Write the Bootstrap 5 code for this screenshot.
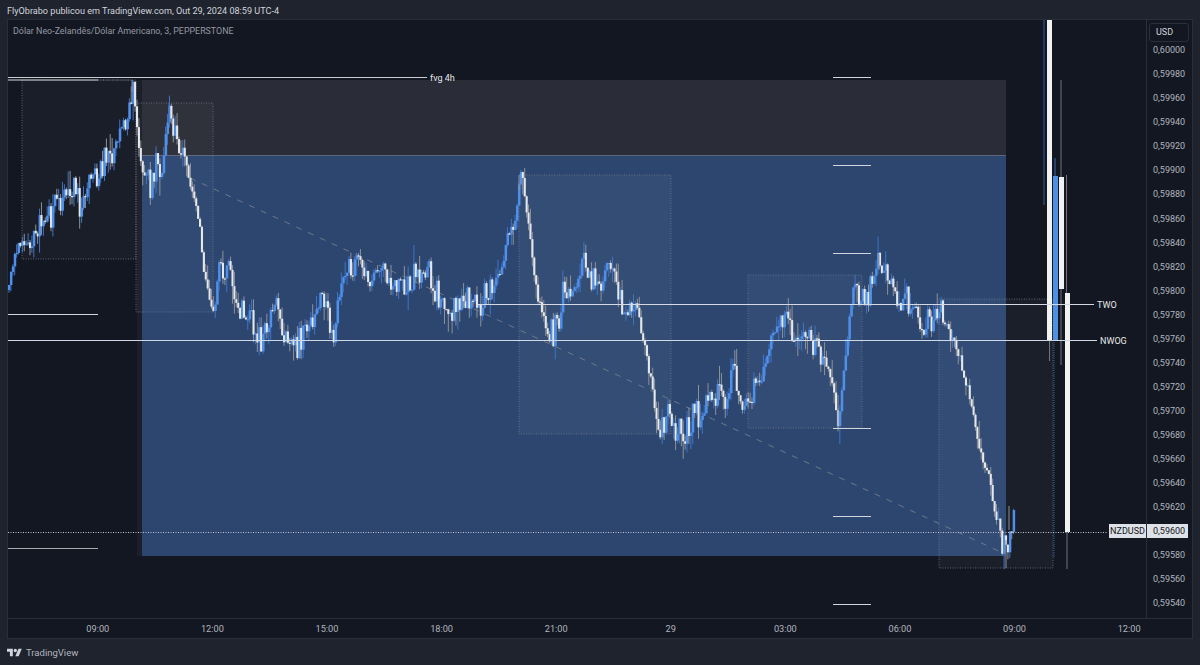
<!DOCTYPE html>
<html lang="pt">
<head>
  <meta charset="UTF-8" />
  <title>NZDUSD — TradingView</title>
  <meta name="viewport" content="width=device-width, initial-scale=1" />
  <link href="https://cdn.jsdelivr.net/npm/bootstrap@5.3.0/dist/css/bootstrap.min.css" rel="stylesheet" />
  <style>
    body {
      background: #1f232e;
      font-family: "Roboto", "Liberation Sans", sans-serif;
      font-size: 9px;
      color: #b2b5be;
      width: 1200px;
      height: 665px;
      overflow: hidden;
    }
    .snap-head { height: 19px; padding-left: 7px; line-height: 23px; color: #d1d4dc; font-size: 9.1px; }
    .chart-box { width: 1186px; height: 620px; margin-left: 7px; background: #131722; border: 1px solid #2a2e39; }
    .plot { width: 1138px; height: 598px; }
    .plot svg { display: block; }
    .candles { filter: blur(0.3px); }
    .plot-title { top: 5px; left: 5px; color: #9598a1; font-size: 8.9px; }
    .price-axis { width: 46px; border-left: 1px solid #2a2e39; padding-top: 18.3px; }
    .price-axis div { height: 24.04px; line-height: 24.04px; padding-left: 6px; font-size: 9px; }
    .price-axis .now { color: #131722; padding-top: 5px; }
    .price-axis .now span { display: block; height: 14px; line-height: 14px; width: 41px; margin-left: -6px; padding-left: 6px; background: #dfe1e8; position: relative; }
    .sym-tag { right: 100%; top: 0; width: 37px; height: 14px; margin-right: 1px; background: #dfe1e8; color: #131722; text-align: center; font-size: 9px; }
    .price-axis .usd-btn { top: 3px; left: 2px; width: 40px; height: 19px; line-height: 17px; border: 1px solid #2a2e39; border-radius: 3px; color: #d1d4dc; padding-left: 6px; font-size: 9px; background: #131722; }
    .time-axis { height: 20px; border-top: 1px solid #2a2e39; line-height: 19px; font-size: 9.2px; }
    .time-axis span { width: 114.6px; text-align: center; flex: none; }
    .time-axis .lead { width: 32.5px; }
    .snap-foot { padding: 8px 0 0 7px; color: #b2b5be; font-size: 9.5px; line-height: 12px; }
    .snap-foot svg { width: 15px; height: 12px; }
    .hl-label { fill: #e6e7ea; font-size: 9px; font-family: "Roboto", "Liberation Sans", sans-serif; }
  </style>
</head>
<body class="m-0">

  <div class="snap-head">FlyObrabo publicou em TradingView.com, Out 29, 2024 08:59 UTC-4</div>

  <div class="chart-box">
    <div class="d-flex">
      <div class="plot position-relative">
        <svg id="chart" width="1138" height="598" viewBox="8 20 1138 598"></svg>
        <div class="plot-title position-absolute">Dólar Neo-Zelandês/Dólar Americano, 3, PEPPERSTONE</div>
      </div>
      <div class="price-axis position-relative" id="prices">
        <div class="usd-btn position-absolute">USD</div>
      </div>
    </div>
    <div class="time-axis d-flex" id="times"></div>
  </div>

  <div class="snap-foot d-flex align-items-center gap-1">
    <svg viewBox="0 0 36 28"><path fill="#d1d4dc" d="M14 22H7V11H0V4h14v18zM28 22h-8l7.5-18h8L28 22z"/><circle fill="#d1d4dc" cx="20" cy="8" r="4"/></svg>
    <span>TradingView</span>
  </div>

  <script>
    // price scale
    const axis = document.getElementById("prices");
    for (let i = 0; i < 24; i++) {
      const v = (60000 - i * 20).toString();
      const el = document.createElement("div");
      const txt = "0," + v;
      if (v === "59600") {
        el.className = "now";
        el.innerHTML = `<span>${txt}<b class="sym-tag position-absolute fw-normal">NZDUSD</b></span>`;
      } else {
        el.textContent = txt;
      }
      axis.appendChild(el);
    }

    // time scale
    const times = document.getElementById("times");
    times.innerHTML = '<span class="lead"></span>' +
      ["09:00", "12:00", "15:00", "18:00", "21:00", "29", "03:00", "06:00", "09:00", "12:00"]
        .map(t => `<span>${t}</span>`).join("");

    // price path, page coords
    const path = [[8,290],[12,262],[20,240],[30,238],[45,222],[55,205],[65,190],[72,190],[78,205],[85,185],[95,175],[105,160],[112,150],[120,130],[128,115],[132,84],[135,110],[138,150],[143,175],[150,185],[155,165],[160,175],[165,140],[169,112],[173,135],[177,150],[183,150],[187,175],[192,190],[198,220],[203,270],[208,300],[213,300],[218,270],[228,260],[232,295],[238,315],[245,310],[252,320],[260,340],[268,325],[275,310],[282,340],[290,355],[297,345],[305,325],[312,320],[320,295],[325,310],[332,335],[338,295],[345,270],[352,262],[360,272],[368,278],[375,285],[380,275],[390,285],[398,288],[405,290],[410,275],[420,272],[428,270],[435,290],[440,308],[447,305],[455,315],[462,300],[470,300],[478,312],[486,285],[492,285],[500,275],[505,240],[510,225],[513,235],[517,190],[520,180],[524,200],[528,225],[532,265],[537,300],[545,325],[552,335],[558,320],[563,290],[570,300],[578,285],[583,255],[590,280],[598,285],[605,265],[612,265],[618,300],[625,315],[632,295],[638,315],[643,345],[650,380],[655,420],[660,430],[668,410],[675,430],[683,435],[690,420],[697,415],[703,405],[710,385],[718,400],[725,395],[732,365],[740,410],[750,395],[760,380],[770,340],[778,315],[785,312],[792,330],[802,330],[810,345],[820,350],[826,365],[833,390],[838,420],[843,370],[848,320],[852,285],[858,290],[865,295],[872,285],[878,260],[885,280],[892,295],[898,310],[905,300],[912,315],[920,325],[930,320],[940,315],[947,335],[955,345],[962,370],[970,400],[977,440],[982,460],[988,475],[993,510],[998,525],[1002,545],[1006,560],[1008,530],[1013,522]];

    let seed = 23;
    const rnd = () => (seed = (seed * 16807) % 2147483647) / 2147483647;
    const yAt = x => {
      for (let i = 1; i < path.length; i++) {
        if (x <= path[i][0]) {
          const a = path[i - 1], b = path[i];
          return a[1] + (b[1] - a[1]) * (x - a[0]) / (b[0] - a[0]);
        }
      }
      return path[path.length - 1][1];
    };

    const rect = (x, y, w, h, fill, extra = "") => `<rect x="${x}" y="${y}" width="${w}" height="${h}" fill="${fill}" ${extra}/>`;
    const line = (x1, y1, x2, y2, stroke, w = 1, extra = "") => `<line x1="${x1}" y1="${y1}" x2="${x2}" y2="${y2}" stroke="${stroke}" stroke-width="${w}" ${extra}/>`;
    const dotted = 'stroke-dasharray="1 1.5"';
    const box = (x, y, w, h, fill) => rect(x, y, w, h, fill, `stroke="#6f7686" stroke-width="0.8" ${dotted}`);

    let s = "";
    // zones
    s += rect(137, 80, 5, 476, "#1b1f2a");
    s += rect(142, 80, 864, 75, "#2a2d37");
    s += rect(142, 155, 864, 401, "#2c4670");
    s += line(142, 155.5, 1006, 155.5, "#5d6678");
    // dotted boxes
    s += box(22, 80, 114, 179, "rgba(255,255,255,.03)");
    s += box(136, 103, 77, 209, "rgba(255,255,255,.025)");
    s += box(519, 175, 152, 259, "rgba(255,255,255,.04)");
    s += box(748, 275, 114, 153, "rgba(255,255,255,.035)");
    s += box(939, 299, 114, 269, "rgba(255,255,255,.035)");
    // diagonal
    s += line(190, 178, 1003, 553, "#6f7888", 1, 'stroke-dasharray="6 7"');

    // candles: close wobbles around the path, less on the steep legs
    s += '<g class="candles">';
    let prev = yAt(8);
    for (let x = 8; x < 1014; x += 1.91) {
      const slope = Math.abs(yAt(x + 10) - yAt(x - 10)) / 20;
      const amp = slope > 2 ? 10 : 30;
      const c = yAt(x) + (rnd() - 0.5) * amp;
      const top = Math.min(prev, c), bot = Math.max(prev, c);
      const up = c < prev;
      const hi = top - rnd() * rnd() * 20, lo = bot + rnd() * rnd() * 20;
      s += line(x + 1, hi, x + 1, lo, up ? "#3f74c4" : "#8e9198", 1);
      s += rect(x, top, up ? 2.5 : 2.1, Math.max(bot - top, 1.2), up ? "#4f91ea" : "#e6e7ea");
      prev = c;
    }
    s += "</g>";
    // spikes
    [[132, 80, 92, "#8e9198"], [169, 103, 125, "#3f74c4"], [519, 175, 190, "#8e9198"], [879, 254, 270, "#8e9198"],
     [838, 395, 428, "#8e9198"], [1006, 540, 568, "#8e9198"], [1009, 506, 530, "#8e9198"]].forEach(w => {
      s += line(w[0], w[1], w[0], w[2], w[3], 1);
    });

    // far right bars
    s += line(1044, 20, 1044, 205, "#2f5f9e", 1);
    s += rect(1047, 20, 5, 320, "#f2f2f3");
    s += line(1049.5, 340, 1049.5, 361, "#70747e", 1);
    s += line(1055, 158, 1055, 176, "#2f5f9e", 1.2);
    s += rect(1053, 176, 5, 164, "#4f8fe3");
    s += line(1054, 340, 1054, 558, "#2f5f9e", 1, 'stroke-dasharray="1 1"');
    s += line(1061, 80, 1061, 365, "#70747e", 1);
    s += rect(1059, 177, 5, 112, "#f2f2f3");
    s += line(1066.5, 175, 1066.5, 293, "#70747e", 1);
    s += rect(1065, 293, 5, 239, "#f2f2f3");
    s += line(1067, 532, 1067, 569, "#70747e", 1);

    // horizontal levels
    s += line(8, 77.5, 427, 77.5, "#c9cbd0", 1);
    s += line(8, 80, 98, 80, "#d8d9dc", 1);
    s += line(98, 80, 132, 80, "#8b92a0", 0.8, dotted);
    s += `<text class="hl-label" x="430" y="81">fvg 4h</text>`;
    s += line(8, 314.5, 98, 314.5, "#d1d4dc", 1);
    s += line(8, 548.5, 98, 548.5, "#a9abb1", 1);
    [77, 165, 253, 428, 516, 604].forEach(y => { s += line(833, y + 0.5, 871, y + 0.5, "#d1d4dc", 1); });
    s += line(478, 304.5, 1094, 304.5, "#d4d9e3", 1);
    s += `<text class="hl-label" x="1097" y="308">TWO</text>`;
    s += line(8, 340.5, 1097, 340.5, "#cfd8e8", 1);
    s += `<text class="hl-label" x="1100" y="344">NWOG</text>`;
    s += line(8, 532.5, 1108, 532.5, "#c3c6ce", 1, dotted);

    document.getElementById("chart").innerHTML = s;
  </script>
  <script src="https://cdn.jsdelivr.net/npm/bootstrap@5.3.0/dist/js/bootstrap.bundle.min.js"></script>
</body>
</html>
